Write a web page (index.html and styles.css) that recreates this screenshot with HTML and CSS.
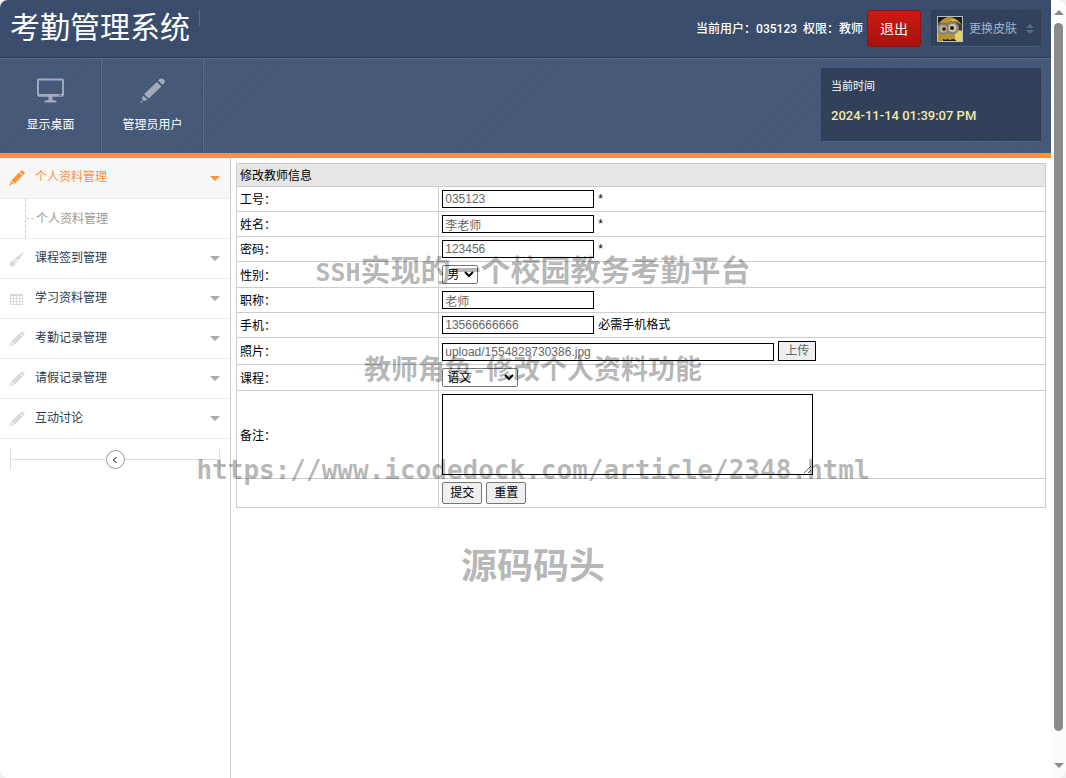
FILE: index.html
```html
<!DOCTYPE html>
<html lang="zh-CN">
<head>
<meta charset="utf-8">
<title>考勤管理系统</title>
<link rel="stylesheet" href="styles.css">
</head>
<body>
<svg class="defs" aria-hidden="true">
  <symbol id="pencil" viewBox="0 0 26 26">
    <path d="M19.500 1.800q2.200-2.600 4.600-.4t0 4.400l-1 1-4.400-4.200zM17.300 4l4.600 4.400L9.200 20.600 4.600 16.200zM3.600 17.400l4.400 4.300-3.700 1.400L2.300 21zM1.800 22.600l1.300 1.200-2.700 1.600z"/>
  </symbol>
  <symbol id="small-pencil" viewBox="0 0 16 16">
    <path d="M12 .8q1-1 2.600.4t.6 2.800l-1 1.200L10.900 2zM10.200 2.600l3.300 3.200-7.800 7.800-3.400-3.200zM1.800 10.900l3 3-2 .6-1.600-1.500zM.9 13.600l1.300 1.200-2.100.9z"/>
  </symbol>
  <symbol id="brush" viewBox="0 0 16 16">
    <path d="M15.900.2L8.800 9.900 6 7.100zM5.500 7.800l2.700 2.700-.9 1.400-3.300-3.200zM3.500 9.200l3.300 3.200-2.200 3.300-1.300-.6-.4.700-1-1-.8.300-1.100-2z"/>
  </symbol>
  <symbol id="grid" viewBox="0 0 16 16">
    <path fill-rule="evenodd" d="M1 3h13v11H1zM2 5v2h2V5zm3 0v2h2V5zm3 0v2h2V5zm3 0v2h2V5zM2 8v2h2V8zm3 0v2h2V8zm3 0v2h2V8zm3 0v2h2V8zM2 11v2h2v-2zm3 0v2h2v-2zm3 0v2h2v-2zm3 0v2h2v-2z"/>
  </symbol>
</svg>

<div class="shell">
  <div class="app">
    <header class="topbar">
      <h1 class="brand">考勤管理系统</h1>
      <div class="account">
        <span class="user">当前用户：035123&nbsp; 权限：教师</span>
        <button class="logout" type="button">退出</button>
        <button class="skin" type="button">
          <svg class="avatar" viewBox="0 0 26 26" aria-hidden="true">
            <rect width="26" height="26" fill="#1d1a14"/>
            <path d="M1 26V15Q-1 8 4 5q6-6 13-3 8 3 9 13v11z" fill="#b8922a"/>
            <path d="M14 3q8 1 12 11v12h-8V12z" fill="#e8cf6a"/>
            <path d="M0 9q5-4 10-1 4-4 10-2l6 4v5l-6-1H0z" fill="#3b3a35"/>
            <circle cx="6" cy="13" r="6" fill="#85857e"/><circle cx="15.500" cy="12" r="6.500" fill="#85857e"/>
            <circle cx="6" cy="13" r="3.600" fill="#c7b08a"/><circle cx="15.500" cy="12" r="4" fill="#d2c4a8"/>
            <circle cx="7" cy="13" r="1.800" fill="#23180d"/><circle cx="15" cy="12" r="2" fill="#23180d"/>
            <path d="M6 25v-2l3 1 1-1 3 1 3-1 3 1v1z" fill="#1d1a14"/>
            <rect x=".5" y=".5" width="25" height="25" fill="none" stroke="#b6c0cd"/>
          </svg>
          <span>更换皮肤</span>
          <svg class="sort" viewBox="0 0 8 10" aria-hidden="true"><path d="M0 4l4-4 4 4zM0 6h8l-4 4z" fill="#596b87"/></svg>
        </button>
      </div>
    </header>

    <nav class="shortcuts">
      <a class="shortcut" href="#">
        <svg viewBox="0 0 28 26" aria-hidden="true"><path fill-rule="evenodd" d="M2 0h24q2 0 2 2v15q0 2-2 2H16v3l4 1q1 2-1 2H9q-2 0-1-2l4-1v-3H2q-2 0-2-2V2q0-2 2-2zm0 2v14h24V2zm21 15v1h2v-1z"/></svg>
        <span>显示桌面</span>
      </a>
      <a class="shortcut" href="#">
        <svg viewBox="0 0 26 26" aria-hidden="true"><use href="#pencil"/></svg>
        <span>管理员用户</span>
      </a>
      <div class="clock">
        <span>当前时间</span>
        <time>2024-11-14 01:39:07 PM</time>
      </div>
    </nav>

    <div class="body">
      <aside class="sidebar">
        <a class="item active" href="#"><svg class="icon"><use href="#small-pencil"/></svg><span>个人资料管理</span><i class="caret"></i></a>
        <div class="sub"><a href="#">个人资料管理</a></div>
        <a class="item" href="#"><svg class="icon"><use href="#brush"/></svg><span>课程签到管理</span><i class="caret"></i></a>
        <a class="item" href="#"><svg class="icon"><use href="#grid"/></svg><span>学习资料管理</span><i class="caret"></i></a>
        <a class="item" href="#"><svg class="icon"><use href="#small-pencil"/></svg><span>考勤记录管理</span><i class="caret"></i></a>
        <a class="item" href="#"><svg class="icon"><use href="#small-pencil"/></svg><span>请假记录管理</span><i class="caret"></i></a>
        <a class="item" href="#"><svg class="icon"><use href="#small-pencil"/></svg><span>互动讨论</span><i class="caret"></i></a>
        <div class="collapse">
          <span class="rule"></span>
          <button type="button" aria-label="收起菜单"><svg viewBox="0 0 6 8"><path d="M4.500 1L1.500 4l3 3" fill="none" stroke="#000"/></svg></button>
          <span class="rule"></span>
        </div>
      </aside>

      <main class="content">
        <form>
          <table class="form">
            <thead><tr><th colspan="2">修改教师信息</th></tr></thead>
            <tbody>
              <tr><td class="name"><label for="no">工号：</label></td><td><div class="field"><input id="no" type="text" value="035123"><span>*</span></div></td></tr>
              <tr><td class="name"><label for="xm">姓名：</label></td><td><div class="field"><input id="xm" type="text" value="李老师"><span>*</span></div></td></tr>
              <tr><td class="name"><label for="pw">密码：</label></td><td><div class="field"><input id="pw" type="text" value="123456"><span>*</span></div></td></tr>
              <tr><td class="name"><label for="sex">性别：</label></td><td><div class="field"><select id="sex" class="short"><option>男</option><option>女</option></select></div></td></tr>
              <tr><td class="name"><label for="job">职称：</label></td><td><div class="field"><input id="job" type="text" value="老师"></div></td></tr>
              <tr><td class="name"><label for="tel">手机：</label></td><td><div class="field"><input id="tel" type="text" value="13566666666"><span>必需手机格式</span></div></td></tr>
              <tr><td class="name"><label for="pic">照片：</label></td><td><div class="field"><input id="pic" class="wide" type="text" value="upload/1554828730386.jpg"><button class="upload" type="button">上传</button></div></td></tr>
              <tr><td class="name"><label for="course">课程：</label></td><td><div class="field"><select id="course"><option>语文</option></select></div></td></tr>
              <tr><td class="name"><label for="note">备注：</label></td><td><div class="field"><textarea id="note"></textarea></div></td></tr>
              <tr><td class="name"></td><td><div class="field"><button class="action" type="submit">提交</button><button class="action" type="reset">重置</button></div></td></tr>
            </tbody>
          </table>
        </form>
      </main>
    </div>
  </div>
  <div class="scrollbar" aria-hidden="true"><i class="up"></i><i class="thumb"></i><i class="down"></i></div>
</div>

<div class="watermark">
  <p class="w1"><span>SSH</span>实现的一个校园教务考勤平台</p>
  <p class="w2">教师角色<span>-</span>修改个人资料功能</p>
  <p class="w3">https://www.icodedock.com/article/2348.html</p>
  <p class="w4">源码码头</p>
</div>
</body>
</html>
```

FILE: styles.css
```css
* { box-sizing: border-box; }

body {
  margin: 0;
  background: #fff;
  font: 12px/18px "Liberation Sans", "Noto Sans CJK SC", sans-serif;
  color: #000;
}

a { color: inherit; text-decoration: none; }
button, input, select, textarea { font: inherit; margin: 0; }
.defs { display: none; }

.shell {
  display: flex;
  min-height: 100vh;
  background: #f0f0f0;
}

.app {
  flex: 1;
  min-width: 0;
  display: flex;
  flex-direction: column;
  background: #fff;
  border-radius: 8px 0 0 8px;
  overflow: hidden;
}

/* Header */
.topbar {
  display: flex;
  justify-content: space-between;
  height: 58px;
  padding: 10px;
  border-bottom: 1px solid #2c3d58;
  background: repeating-linear-gradient(135deg, #3d4f6e 0 1px, #394b6b 1px 3px);
}

.brand {
  position: relative;
  margin: 0;
  padding-right: 10px;
  font-size: 30px;
  font-weight: 400;
  line-height: 36px;
  color: #fff;
}

.brand::after {
  content: "";
  position: absolute;
  top: 0;
  right: 0;
  height: 16px;
  border-right: 1px solid #5a6b87;
}

.account { display: flex; align-items: flex-start; color: #fff; }

.user {
  padding-right: 4px;
  font-family: Roboto, "Noto Sans CJK SC", sans-serif;
  font-weight: 500;
  line-height: 38px;
}

.logout {
  width: 54px;
  height: 37px;
  margin-right: 10px;
  padding: 0;
  border: 1px solid #8d1313;
  border-radius: 3px;
  background: linear-gradient(#cd1a12, #a5120e);
  color: #fff;
  font-size: 14px;
}

.skin {
  display: flex;
  align-items: center;
  gap: 6px;
  width: 110px;
  height: 37px;
  padding: 0 5px;
  border: 1px solid #2e3e58;
  border-bottom-color: #485a79;
  border-radius: 2px;
  background: #32425c;
  color: #a3b2c7;
}

.skin span { white-space: nowrap; }
.avatar { flex: none; width: 26px; height: 26px; }
.sort { flex: none; width: 8px; height: 10px; margin-left: 3px; }

.shortcuts {
  display: flex;
  height: 100px;
  padding-right: 10px;
  border-top: 1px solid #566987;
  border-bottom: 5px solid #fb9337;
  background: repeating-linear-gradient(135deg, #4a5d7c 0 1px, #445776 1px 3px);
}

.shortcut {
  display: flex;
  flex-direction: column;
  align-items: center;
  gap: 12px;
  width: 102px;
  padding-top: 19px;
  border-right: 1px solid #5b6d89;
  box-shadow: inset -1px 0 #3c4e6b;
  color: #fff;
}

.shortcut svg { width: 27px; height: 26px; fill: #a1abba; }

.clock {
  display: flex;
  flex-direction: column;
  gap: 12px;
  width: 220px;
  height: 74px;
  margin: 9px 0 0 auto;
  padding: 8px 9px;
  border: 1px solid #2e3c54;
  border-bottom-color: #52647f;
  border-radius: 2px;
  background: #32415a;
  color: #fff;
  font-size: 11px;
}

.clock time {
  color: #f3eaa8;
  font: 500 13px/18px Roboto, sans-serif;
}

/* Sidebar */
.body { flex: 1; display: flex; }

.sidebar {
  flex: none;
  width: 231px;
  border-right: 1px solid #ccc;
  color: #2b3a53;
}

.item {
  display: flex;
  align-items: center;
  height: 40px;
  padding: 0 10px 0 9px;
  border-bottom: 1px solid #ebebeb;
  line-height: 20px;
}

.item span { padding-bottom: 2px; }
.item.active { height: 41px; background: #f7f7f7; color: #fb9337; }
.icon { width: 16px; height: 16px; margin-right: 10px; fill: #d9d9d9; }
.active .icon { fill: #fb9337; }

.caret {
  margin-left: auto;
  border: 5px solid transparent;
  border-top-color: #aaa;
  border-bottom: 0;
}

.active .caret { border-top-color: #fb9337; }

.sub {
  display: flex;
  height: 40px;
  padding-left: 25px;
  border-bottom: 1px solid #ebebeb;
  color: #999;
  line-height: 38px;
}

.sub a {
  display: flex;
  align-items: center;
  gap: 2px;
  border-left: 1px dashed #ccc;
}

.sub a::before { content: ""; width: 8px; border-top: 1px dashed #ccc; }

.collapse {
  display: flex;
  align-items: center;
  height: 21px;
  margin: 10px;
  border: solid #ddd;
  border-width: 0 1px;
}

.rule { flex: 1; border-top: 1px solid #ddd; }

.collapse button {
  display: flex;
  align-items: center;
  justify-content: center;
  width: 19px;
  height: 19px;
  padding: 0;
  border: 1px solid #999;
  border-radius: 50%;
  background: #fff;
}

.collapse svg { width: 6px; height: 8px; }

/* Form */
.content { flex: 1; min-width: 0; padding: 5px; }

.form {
  width: 100%;
  border-collapse: collapse;
}

.form th, .form td {
  padding: 3px;
  border: 1px solid #ccc;
  text-align: left;
}

.form th { padding: 4px 3px 2px; background: #e6e6e6; font-weight: 400; line-height: 16px; }
.form .name { width: 25%; padding: 4px 3px 2px; }
.name label { display: block; }
.field { display: flex; align-items: flex-end; gap: 4px; }

.field input, .field textarea, .upload {
  border: 1px solid #000;
  border-radius: 0;
  color: #666;
}

.field input { width: 152px; height: 18px; padding: 0 2px; background: #fff; line-height: 16px; }
.field .wide { width: 332px; }
.field textarea { display: block; width: 371px; height: 81px; background: transparent; }
.upload { width: 38px; height: 20px; padding: 0; background: #efefef; line-height: 18px; }

.field select {
  width: 76px;
  height: 19px;
  padding: 0;
  border: 1px solid #767676;
  border-radius: 2px;
  background: #fff;
  color: #000;
}

.field .short { width: 36px; }

.action {
  width: 40px;
  height: 22px;
  padding: 0;
  border: 1px solid #767676;
  border-radius: 2px;
  background: #efefef;
  color: #000;
}

/* Scrollbar */
.scrollbar {
  flex: none;
  display: flex;
  flex-direction: column;
  align-items: center;
  width: 15px;
  padding: 10px 0;
  border-radius: 0 8px 8px 0;
  background: #fcfcfc;
}

.up, .down { border: 5px solid transparent; }
.up { border-top: 0; border-bottom-color: #8b8b8b; }
.down { margin-top: 32px; border-bottom: 0; border-top-color: #8b8b8b; }
.thumb { flex: 1; width: 9px; margin-top: 8px; border-radius: 5px; background: #8b8b8b; }

/* Watermark */
.watermark {
  position: absolute;
  inset: 218px 0 auto;
  color: rgba(0, 0, 0, .3);
  font-family: "Noto Sans CJK SC", sans-serif;
  font-weight: 700;
  text-align: center;
  white-space: nowrap;
  overflow: hidden;
  pointer-events: none;
}

.watermark p { height: 100px; margin: 0; line-height: 100px; }
.w1 { font-size: 30px; }
.w1 span { font-family: "DejaVu Sans Mono", monospace; font-size: 25px; }
.w2 { font-size: 27px; }
.w2 span { display: inline-block; width: 14px; }
.watermark .w3 { font: 700 26px/104px "DejaVu Sans Mono", monospace; }
.watermark .w4 { height: 90px; font-size: 36px; line-height: 90px; }
```
